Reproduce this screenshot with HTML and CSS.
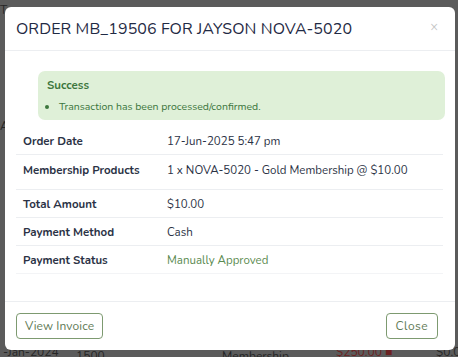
FILE: index.html
```html
<!DOCTYPE html>
<html lang="en">
<head>
  <meta charset="UTF-8" />
  <title>Order MB_19506</title>
  <link rel="stylesheet" href="styles.css">
</head>
<body>
  <div class="backdrop">
    <span class="bg-a">T</span>
    <span class="bg-b">A</span>
    <span class="bg-date">-Jan-2024</span>
    <span class="bg-num">1500</span>
    <span class="bg-mid">Membership</span>
    <span class="bg-price">$250.00 &#9632;</span>
    <span class="bg-zero">$0.0</span>
  </div>

  <div class="modal">
    <div class="modal-header">
      <h4 class="modal-title">ORDER MB_19506 FOR JAYSON NOVA-5020</h4>
      <span class="close-x">&times;</span>
    </div>

    <div class="modal-body">
      <div class="alert">
        <div class="alert-title">Success</div>
        <ul>
          <li>Transaction has been processed/confirmed.</li>
        </ul>
      </div>

      <table class="details">
        <tr>
          <th>Order Date</th>
          <td>17-Jun-2025 5:47 pm</td>
        </tr>
        <tr class="tall">
          <th>Membership Products</th>
          <td>1 x NOVA-5020 - Gold Membership @ $10.00</td>
        </tr>
        <tr>
          <th>Total Amount</th>
          <td>$10.00</td>
        </tr>
        <tr>
          <th>Payment Method</th>
          <td>Cash</td>
        </tr>
        <tr>
          <th>Payment Status</th>
          <td class="approved">Manually Approved</td>
        </tr>
      </table>
    </div>

    <div class="modal-footer">
      <button class="btn">View Invoice</button>
      <button class="btn btn-close">Close</button>
    </div>
  </div>
</body>
</html>
```

FILE: styles.css
```css
body {
  margin: 0;
  height: 357px;
  background: #5b5b5b;
  font-family: 'Nunito', 'Lato', sans-serif;
  color: #2b3245;
  overflow: hidden;
  padding: 7px 3px 0 5px;
  box-sizing: border-box;
}
.backdrop span {
  position: absolute;
  color: #262626;
  font-size: 12px;
}
.bg-a { left: 0; top: 2px; }
.bg-b { left: 0; top: 118px; }
.bg-date { left: 3px; top: 344px; }
.bg-num { left: 76px; top: 348px; }
.bg-mid { left: 222px; top: 348px; }
.bg-price { left: 336px; top: 344px; color: #6b2222 !important; }
.bg-zero { left: 436px; top: 344px; }

.modal {
  position: relative;
  width: 450px;
  height: 343px;
  background: #fff;
  border-radius: 6px;
  display: flex;
  flex-direction: column;
}
.modal-header {
  display: flex;
  align-items: center;
  justify-content: space-between;
  height: 43px;
  padding: 0 17px 0 11px;
  border-bottom: 1px solid #eceef1;
}
.modal-title {
  margin: 0;
  font-size: 16px;
  font-weight: normal;
  letter-spacing: 0.1px;
  color: #1f2a44;
}
.close-x {
  color: #c4c4c4;
  font-size: 13px;
  margin-top: -3px;
}
.modal-body {
  flex: 1;
  padding: 20px 12px 0 11px;
}
.alert {
  margin-left: 22px;
  margin-right: -2px;
  background: #dff0d8;
  border-radius: 7px;
  padding: 6px 9px 6px;
  color: #3c763d;
  font-size: 10.5px;
}
.alert-title {
  font-weight: bold;
  font-size: 11.5px;
  margin-bottom: 6px;
}
.alert ul {
  margin: 0;
  padding-left: 12px;
}
.details {
  width: 100%;
  border-collapse: collapse;
  margin-top: 7px;
  font-size: 11.5px;
}
.details th,
.details td {
  text-align: left;
  padding: 0 7px;
  height: 27px;
  border-bottom: 1px solid #eceef1;
}
.details th {
  width: 130px;
  font-weight: bold;
}
.details tr.tall th,
.details tr.tall td {
  height: 27px;
  vertical-align: top;
  padding-top: 7px;
}
.details tr:last-child th,
.details tr:last-child td {
  border-bottom: 1px solid #f3f4f6;
}
.approved {
  color: #5a8a4f;
}
.modal-footer {
  display: flex;
  justify-content: space-between;
  align-items: center;
  height: 48px;
  padding: 0 17px 0 11px;
  border-top: 1px solid #eceef1;
}
.btn {
  font-family: inherit;
  font-size: 12px;
  color: #5f7a55;
  background: #fff;
  border: 1px solid #7d9a70;
  border-radius: 4px;
  height: 26px;
  padding: 0 8px;
  letter-spacing: 0.1px;
}
.btn-close {
  padding: 0 9px;
  letter-spacing: 0.4px;
}
```
